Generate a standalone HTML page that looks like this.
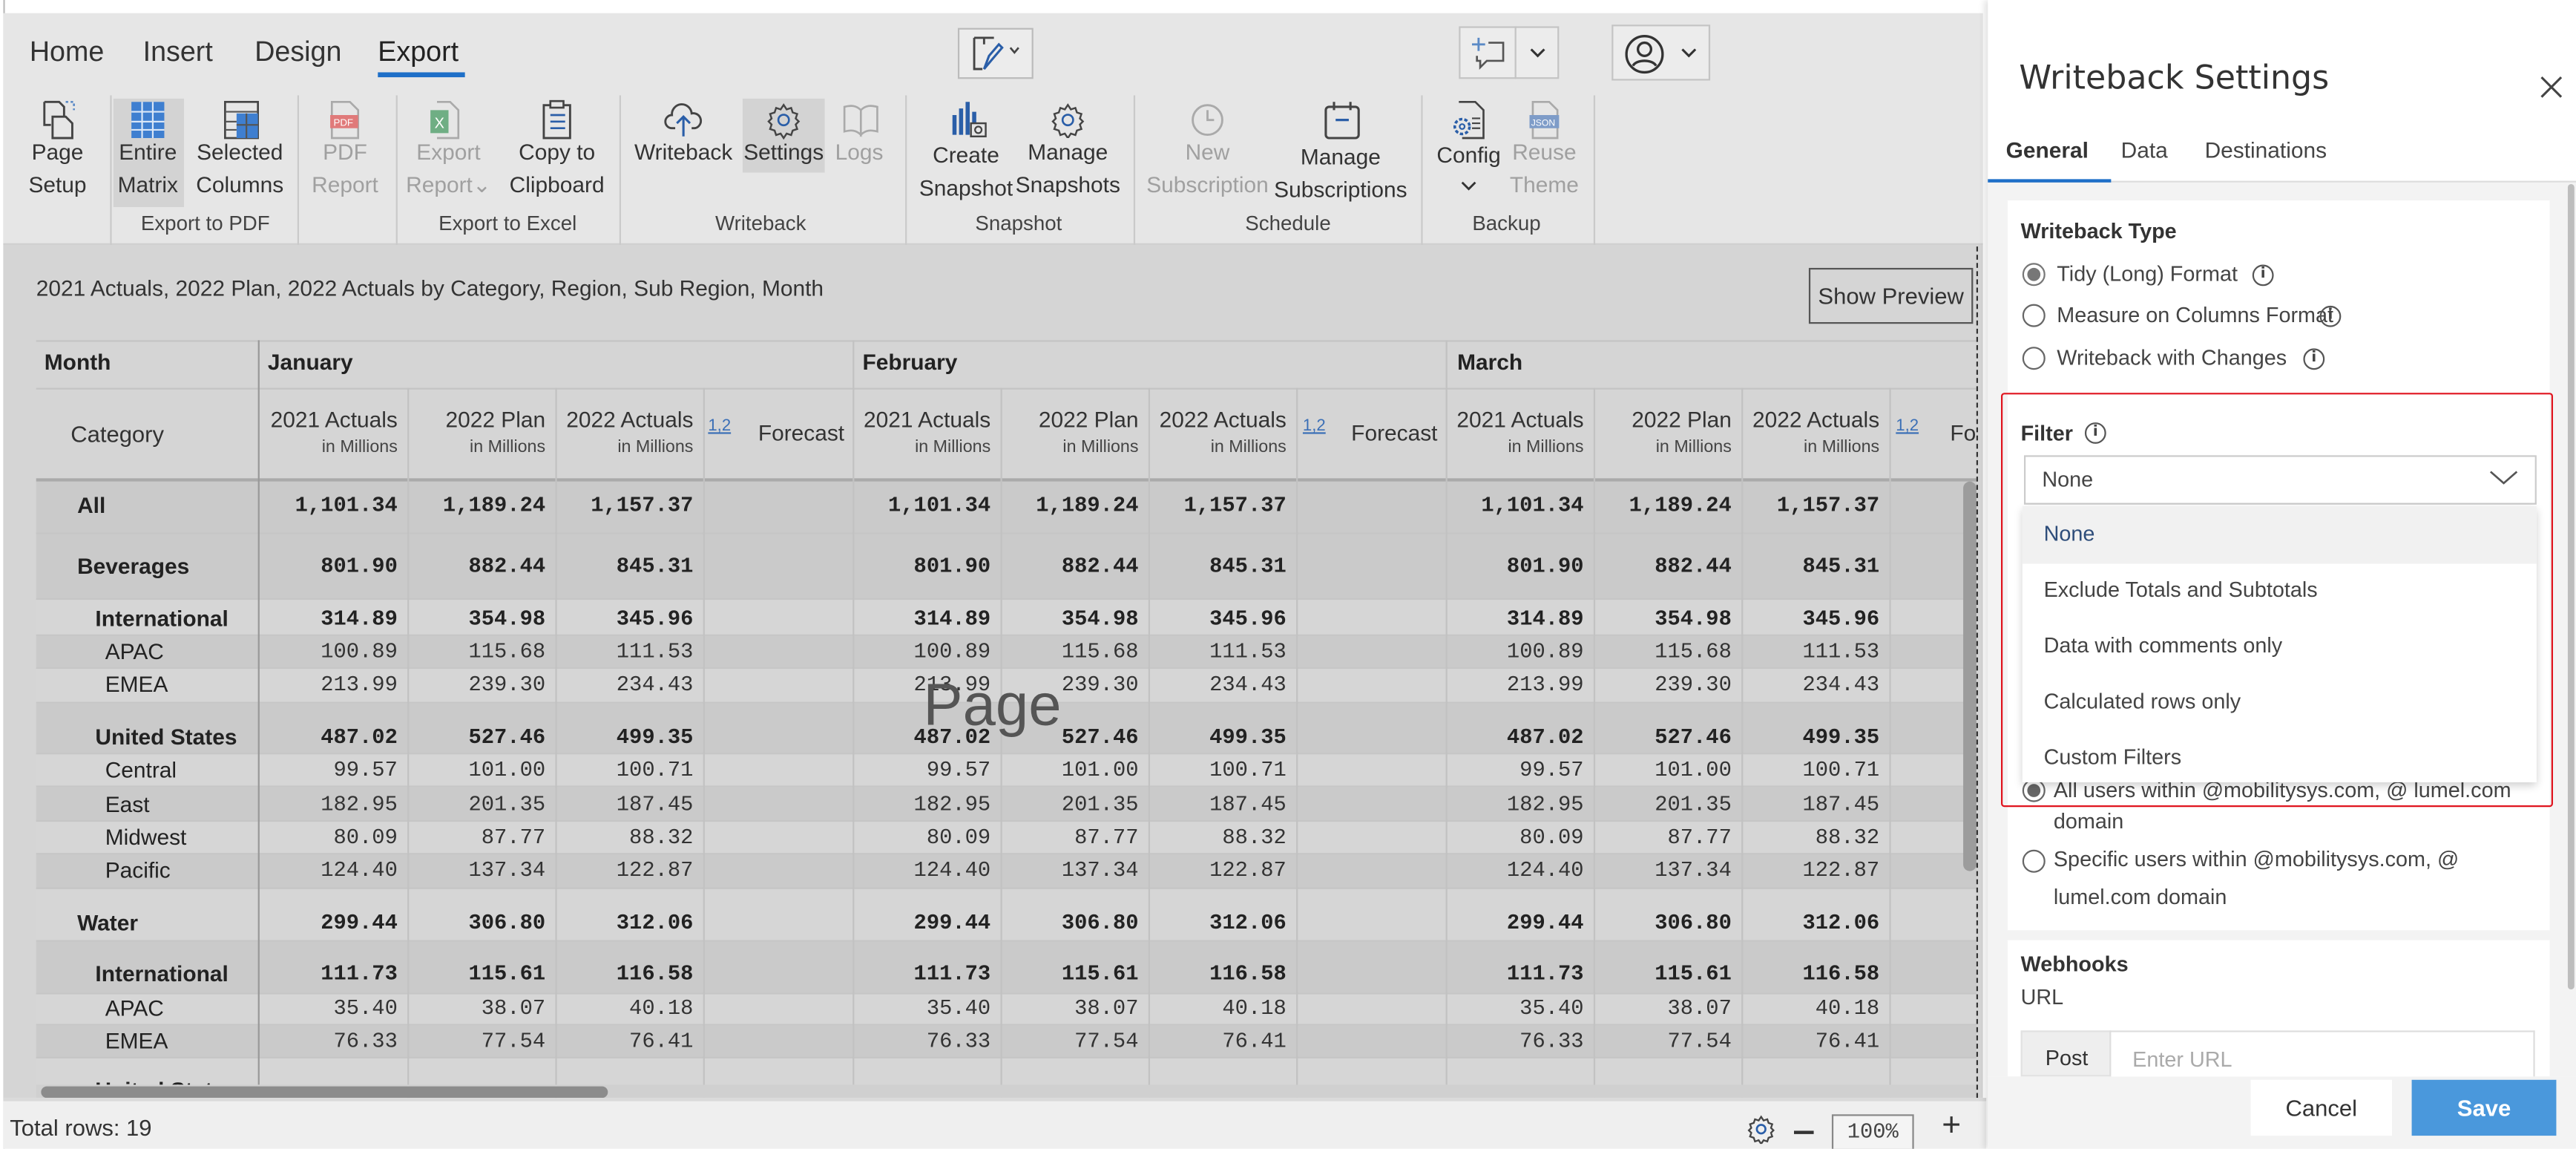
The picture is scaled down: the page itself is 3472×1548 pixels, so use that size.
<!DOCTYPE html>
<html><head><meta charset="utf-8">
<style>
*{margin:0;padding:0;box-sizing:border-box}
html,body{width:3472px;height:1547px;overflow:hidden;background:#fff}
#w{position:absolute;left:0;top:0;width:1568px;height:699px;transform:scale(2.21429);transform-origin:0 0;font-family:"Liberation Sans",sans-serif;color:#333;overflow:hidden}
.a{position:absolute}
.t{position:absolute;white-space:nowrap}
#rib{left:2px;top:8px;width:1205px;height:141px;background:#e6e6e6;border-bottom:1px solid #cfcfcf}
.tab{font-size:17px;top:22px;color:#333}
.lb{font-size:13.5px;color:#333;text-align:center;transform:translateX(-50%);line-height:20px;top:83px}
.dis{color:#a0a0a0}
.gl{font-size:12.5px;top:129px;transform:translateX(-50%);color:#444}
.sep{width:1px;background:#cacaca;top:58px;height:92px}
#cnt{left:2px;top:149px;width:1205px;height:519px;background:#d5d5d5}
.r{position:absolute;left:22px;width:1181px;border-bottom:1px solid #c6c6c6}
.d{background:#cacaca}.L{background:#d6d6d6}
.r i{position:absolute;top:var(--t);font-style:normal;font-family:"Liberation Mono","DejaVu Sans Mono",monospace;font-size:13px;line-height:16px;text-align:right;width:90px;color:#333}
.r b,.r span{position:absolute;top:var(--t);font-size:13.5px;line-height:16px;color:#222;white-space:nowrap}
.r b{font-weight:bold}
.bb i{font-weight:bold;color:#222}
.c1{left:130px}.c2{left:220px}.c3{left:310px}.c4{left:491px}.c5{left:581px}.c6{left:671px}.c7{left:852px}.c8{left:942px}.c9{left:1032px}
.vl{position:absolute;top:207px;height:453px;width:1px;background:#c2c2c2}
.hd{font-size:13.5px;color:#333;text-align:right;white-space:nowrap;position:absolute}
.hs{font-size:10.5px;color:#444;text-align:right;position:absolute;white-space:nowrap}
.ot{font-size:10px;color:#3b6fb6;text-decoration:underline;position:absolute}
#pn{left:1210px;top:0;width:358px;height:699px;background:#fff;box-shadow:-2px 0 4px rgba(0,0,0,.12)}
.p{position:absolute;white-space:nowrap;font-family:"Liberation Sans",sans-serif;color:#444}
.rad{position:absolute;width:14px;height:14px;border:1.3px solid #666;border-radius:50%;background:#fff}
.inf{position:absolute;width:13px;height:13px;border:1.2px solid #555;border-radius:50%;font-size:9px;line-height:11px;text-align:center;font-family:"DejaVu Sans",sans-serif;color:#444;font-weight:bold}
.dd{font-size:13px;color:#444;left:1244px}
</style></head><body><div id="w">

<div class="a" style="left:2px;top:0;width:1px;height:699px;background:#bbb"></div>
<div class="a" id="rib"></div>
<div class="t tab" style="left:18px">Home</div>
<div class="t tab" style="left:87px">Insert</div>
<div class="t tab" style="left:155px">Design</div>
<div class="t tab" style="left:230px;color:#222">Export</div>
<div class="a" style="left:230px;top:44px;width:53px;height:3px;background:#1e6fc8"></div>

<div class="a" style="left:583px;top:17px;width:46px;height:31px;border:1px solid #bbb;background:#ececec"></div>
<svg class="a" style="left:588px;top:20px" width="36" height="26" viewBox="0 0 36 26"><path d="M5 3h12M11 3v4M5 3v19h5" stroke="#444" stroke-width="1.3" fill="none"/><path d="M11 22l3-8 6-7 2 2-6 7z" stroke="#2a5ea8" stroke-width="1.4" fill="none"/><path d="M27 9l2.5 3 2.5-3" stroke="#444" stroke-width="1.2" fill="none"/></svg>
<div class="a" style="left:888px;top:16px;width:61px;height:32px;border:1px solid #c4c4c4;background:#ececec"></div>
<div class="a" style="left:922px;top:16px;width:1px;height:32px;background:#c4c4c4"></div>
<svg class="a" style="left:893px;top:20px" width="26" height="26" viewBox="0 0 26 26"><path d="M7 3v8M3 7h8" stroke="#5b8ac6" stroke-width="1.3"/><path d="M13 6h9v11h-10l-4 4v-4H6v-3" stroke="#555" stroke-width="1.2" fill="none"/></svg>
<svg class="a" style="left:930px;top:28px" width="12" height="8"><path d="M2 2l4 4 4-4" stroke="#333" stroke-width="1.4" fill="none"/></svg>
<div class="a" style="left:981px;top:15px;width:60px;height:34px;border:1px solid #c4c4c4;background:#ececec"></div>
<svg class="a" style="left:988px;top:20px" width="26" height="26" viewBox="0 0 26 26"><circle cx="13" cy="13" r="11" stroke="#333" stroke-width="1.5" fill="none"/><circle cx="13" cy="10" r="4" stroke="#333" stroke-width="1.5" fill="none"/><path d="M6 20c2-4 12-4 14 0" stroke="#333" stroke-width="1.5" fill="none"/></svg>
<svg class="a" style="left:1022px;top:28px" width="12" height="8"><path d="M2 2l4 4 4-4" stroke="#333" stroke-width="1.4" fill="none"/></svg>

<div class="a" style="left:69px;top:60px;width:43px;height:66px;background:#d3d3d3"></div>
<div class="a" style="left:452px;top:60px;width:50px;height:45px;background:#d3d3d3"></div>

<svg class="a" style="left:24px;top:60px" width="24" height="26" viewBox="0 0 24 26"><path d="M3 2h9l3 3v6M3 2v14h4" stroke="#444" stroke-width="1.3" fill="none"/><path d="M8 11h8l4 4v9H8z" stroke="#444" stroke-width="1.3" fill="none"/><path d="M16 2h5v5" stroke="#5b8ac6" stroke-width="1.2" stroke-dasharray="1.5 1.5" fill="none"/></svg>
<svg class="a" style="left:79px;top:61px" width="22" height="24" viewBox="0 0 22 24"><rect x="1" y="1" width="20" height="22" fill="#3f7fd0"/><path d="M1 7h20M1 13h20M1 18h20M7.5 1v22M14 1v22" stroke="#d9e6f7" stroke-width="1"/></svg>
<svg class="a" style="left:136px;top:61px" width="22" height="24" viewBox="0 0 22 24"><rect x="1" y="1" width="20" height="22" fill="none" stroke="#444" stroke-width="1.2"/><rect x="8" y="8" width="13" height="15" fill="#3f7fd0"/><path d="M1 7h20M8 15h13M14 8v15M1 13h7M1 18h7" stroke="#555" stroke-width="1"/></svg>
<svg class="a" style="left:199px;top:60px" width="22" height="26" viewBox="0 0 22 26"><path d="M3 2h11l5 5v17H3z" stroke="#aaa" stroke-width="1.2" fill="none"/><rect x="2" y="10" width="17" height="8" fill="#e07a7a"/><text x="4" y="16.5" font-size="6" fill="#fff" font-family="Liberation Sans">PDF</text></svg>
<svg class="a" style="left:259px;top:60px" width="22" height="26" viewBox="0 0 22 26"><path d="M7 2h8l5 5v17H7" stroke="#aaa" stroke-width="1.2" fill="none"/><rect x="3" y="7" width="11" height="14" fill="#6fae84"/><text x="5.5" y="18" font-size="9" fill="#fff" font-family="Liberation Sans">X</text></svg>
<svg class="a" style="left:328px;top:60px" width="22" height="26" viewBox="0 0 22 26"><rect x="3" y="4" width="16" height="20" stroke="#444" stroke-width="1.3" fill="none"/><rect x="7" y="1.5" width="8" height="4" stroke="#444" stroke-width="1.2" fill="#e6e6e6"/><path d="M7 10h9M7 14h9M7 18h9" stroke="#2a5ea8" stroke-width="1.2"/></svg>
<svg class="a" style="left:404px;top:61px" width="24" height="24" viewBox="0 0 24 24"><path d="M7 17H5a4 4 0 0 1 0-8 6 6 0 0 1 12-1 4 4 0 0 1 2 9h-2" stroke="#444" stroke-width="1.3" fill="none"/><path d="M12 22V11M8 14l4-4 4 4" stroke="#2a5ea8" stroke-width="1.4" fill="none"/></svg>
<svg class="a" style="left:466px;top:61px" width="22" height="24" viewBox="0 0 24 24"><circle cx="12" cy="12" r="3.5" stroke="#2a5ea8" stroke-width="1.3" fill="none"/><path d="M12 2l2 3 3-1 1 3 3 1-1 3 2 2-2 2 1 3-3 1-1 3-3-1-2 3-2-3-3 1-1-3-3-1 1-3-2-2 2-2-1-3 3-1 1-3 3 1z" stroke="#444" stroke-width="1.2" fill="none"/></svg>
<svg class="a" style="left:512px;top:62px" width="24" height="22" viewBox="0 0 24 22"><path d="M2 3c4-1 7-1 10 2v15c-3-3-6-3-10-2zM22 3c-4-1-7-1-10 2v15c3-3 6-3 10-2z" stroke="#aaa" stroke-width="1.2" fill="none"/></svg>
<svg class="a" style="left:577px;top:60px" width="24" height="26" viewBox="0 0 24 26"><path d="M4 10v12M8 6v16M12 2v20M16 8v8" stroke="#2a5ea8" stroke-width="2.5"/><rect x="14" y="15" width="9" height="8" stroke="#444" stroke-width="1.1" fill="#e6e6e6"/><circle cx="18.5" cy="19" r="2" stroke="#444" fill="none"/></svg>
<svg class="a" style="left:639px;top:62px" width="22" height="22" viewBox="0 0 24 24"><circle cx="12" cy="12" r="3.5" stroke="#2a5ea8" stroke-width="1.3" fill="none"/><path d="M12 2l2 3 3-1 1 3 3 1-1 3 2 2-2 2 1 3-3 1-1 3-3-1-2 3-2-3-3 1-1-3-3-1 1-3-2-2 2-2-1-3 3-1 1-3 3 1z" stroke="#444" stroke-width="1.2" fill="none"/></svg>
<svg class="a" style="left:724px;top:62px" width="22" height="22"><circle cx="11" cy="11" r="9" stroke="#aaa" stroke-width="1.3" fill="none"/><path d="M11 5v6h4" stroke="#aaa" stroke-width="1.3" fill="none"/></svg>
<svg class="a" style="left:805px;top:60px" width="24" height="26" viewBox="0 0 24 26"><rect x="2" y="5" width="20" height="19" rx="2" stroke="#444" stroke-width="1.4" fill="none"/><path d="M7 2v5M17 2v5" stroke="#444" stroke-width="1.4"/><path d="M8 13h8" stroke="#2a5ea8" stroke-width="1.5"/></svg>
<svg class="a" style="left:882px;top:60px" width="24" height="26" viewBox="0 0 24 26"><path d="M6 2h10l5 5v17H8" stroke="#444" stroke-width="1.2" fill="none"/><path d="M14 12h5M14 15h5M14 18h5" stroke="#444"/><circle cx="8" cy="17" r="4.5" stroke="#2a5ea8" stroke-width="1.6" stroke-dasharray="2 1.2" fill="none"/><circle cx="8" cy="17" r="1.5" stroke="#2a5ea8" fill="none"/></svg>
<svg class="a" style="left:929px;top:60px" width="22" height="26" viewBox="0 0 22 26"><path d="M4 2h10l5 5v17H4z" stroke="#aaa" stroke-width="1.2" fill="none"/><rect x="2" y="10" width="18" height="8" fill="#7e9cc8"/><text x="3" y="16.5" font-size="5.5" fill="#fff" font-family="Liberation Sans">JSON</text></svg>

<div class="t lb" style="left:35px">Page<br>Setup</div>
<div class="t lb" style="left:90px">Entire<br>Matrix</div>
<div class="t lb" style="left:146px">Selected<br>Columns</div>
<div class="t lb dis" style="left:210px">PDF<br>Report</div>
<div class="t lb dis" style="left:273px">Export<br>Report&#8964;</div>
<div class="t lb" style="left:339px">Copy to<br>Clipboard</div>
<div class="t lb" style="left:416px">Writeback</div>
<div class="t lb" style="left:477px">Settings</div>
<div class="t lb dis" style="left:523px">Logs</div>
<div class="t lb" style="left:588px;top:85px">Create<br>Snapshot</div>
<div class="t lb" style="left:650px">Manage<br>Snapshots</div>
<div class="t lb dis" style="left:735px">New<br>Subscription</div>
<div class="t lb" style="left:816px;top:86px">Manage<br>Subscriptions</div>
<div class="t lb" style="left:894px;top:85px">Config</div>
<svg class="a" style="left:889px;top:110px" width="10" height="7"><path d="M1 1l4 4 4-4" stroke="#333" stroke-width="1.3" fill="none"/></svg>
<div class="t lb dis" style="left:940px">Reuse<br>Theme</div>
<div class="sep a" style="left:67px"></div>
<div class="sep a" style="left:181px"></div>
<div class="sep a" style="left:241px"></div>
<div class="sep a" style="left:377px"></div>
<div class="sep a" style="left:551px"></div>
<div class="sep a" style="left:690px"></div>
<div class="sep a" style="left:865px"></div>
<div class="sep a" style="left:970px"></div>
<div class="t gl" style="left:125px">Export to PDF</div>
<div class="t gl" style="left:309px">Export to Excel</div>
<div class="t gl" style="left:463px">Writeback</div>
<div class="t gl" style="left:620px">Snapshot</div>
<div class="t gl" style="left:784px">Schedule</div>
<div class="t gl" style="left:917px">Backup</div>

<div class="a" id="cnt"></div>
<div class="t" style="left:22px;top:168px;font-size:13.5px;color:#333">2021 Actuals, 2022 Plan, 2022 Actuals by Category, Region, Sub Region, Month</div>
<div class="a" style="left:1101px;top:163px;width:100px;height:34px;border:1px solid #555;font-size:14px;line-height:32px;text-align:center;color:#333">Show Preview</div>

<div class="a" style="left:22px;top:207px;width:1181px;height:86px;background:#d5d5d5;border-top:1px solid #c4c4c4;border-bottom:2px solid #aaa"></div>
<div class="a" style="left:22px;top:236px;width:1181px;height:1px;background:#c4c4c4"></div>
<div class="t" style="left:27px;top:213px;font-size:13.5px;font-weight:bold;color:#222">Month</div>
<div class="t" style="left:163px;top:213px;font-size:13.5px;font-weight:bold;color:#222">January</div>
<div class="t" style="left:525px;top:213px;font-size:13.5px;font-weight:bold;color:#222">February</div>
<div class="t" style="left:887px;top:213px;font-size:13.5px;font-weight:bold;color:#222">March</div>
<div class="t" style="left:43px;top:256px;font-size:14px;color:#333">Category</div>

<div class="hd" style="right:1326px;top:248px">2021 Actuals</div><div class="hs" style="right:1326px;top:266px">in Millions</div>
<div class="hd" style="right:1236px;top:248px">2022 Plan</div><div class="hs" style="right:1236px;top:266px">in Millions</div>
<div class="hd" style="right:1146px;top:248px">2022 Actuals</div><div class="hs" style="right:1146px;top:266px">in Millions</div>
<div class="ot" style="left:431px;top:254px">1,2</div>
<div class="hd" style="right:1054px;top:256px">Forecast</div>
<div class="hd" style="right:965px;top:248px">2021 Actuals</div><div class="hs" style="right:965px;top:266px">in Millions</div>
<div class="hd" style="right:875px;top:248px">2022 Plan</div><div class="hs" style="right:875px;top:266px">in Millions</div>
<div class="hd" style="right:785px;top:248px">2022 Actuals</div><div class="hs" style="right:785px;top:266px">in Millions</div>
<div class="ot" style="left:793px;top:254px">1,2</div>
<div class="hd" style="right:693px;top:256px">Forecast</div>
<div class="hd" style="right:604px;top:248px">2021 Actuals</div><div class="hs" style="right:604px;top:266px">in Millions</div>
<div class="hd" style="right:514px;top:248px">2022 Plan</div><div class="hs" style="right:514px;top:266px">in Millions</div>
<div class="hd" style="right:424px;top:248px">2022 Actuals</div><div class="hs" style="right:424px;top:266px">in Millions</div>
<div class="ot" style="left:1154px;top:254px">1,2</div>
<div class="hd" style="left:1187px;top:256px">Fo</div>

<div class="r d bb" style="top:293px;height:32px;--t:7px"><b style="left:25px">All</b><i class="c1">1,101.34</i><i class="c2">1,189.24</i><i class="c3">1,157.37</i><i class="c4">1,101.34</i><i class="c5">1,189.24</i><i class="c6">1,157.37</i><i class="c7">1,101.34</i><i class="c8">1,189.24</i><i class="c9">1,157.37</i></div>
<div class="r d bb" style="top:325px;height:40px;--t:12px"><b style="left:25px">Beverages</b><i class="c1">801.90</i><i class="c2">882.44</i><i class="c3">845.31</i><i class="c4">801.90</i><i class="c5">882.44</i><i class="c6">845.31</i><i class="c7">801.90</i><i class="c8">882.44</i><i class="c9">845.31</i></div>
<div class="r L bb" style="top:365px;height:22px;--t:4px"><b style="left:36px">International</b><i class="c1">314.89</i><i class="c2">354.98</i><i class="c3">345.96</i><i class="c4">314.89</i><i class="c5">354.98</i><i class="c6">345.96</i><i class="c7">314.89</i><i class="c8">354.98</i><i class="c9">345.96</i></div>
<div class="r d" style="top:387px;height:20px;--t:2px"><span style="left:42px">APAC</span><i class="c1">100.89</i><i class="c2">115.68</i><i class="c3">111.53</i><i class="c4">100.89</i><i class="c5">115.68</i><i class="c6">111.53</i><i class="c7">100.89</i><i class="c8">115.68</i><i class="c9">111.53</i></div>
<div class="r L" style="top:407px;height:21px;--t:2px"><span style="left:42px">EMEA</span><i class="c1">213.99</i><i class="c2">239.30</i><i class="c3">234.43</i><i class="c4">213.99</i><i class="c5">239.30</i><i class="c6">234.43</i><i class="c7">213.99</i><i class="c8">239.30</i><i class="c9">234.43</i></div>
<div class="r d bb" style="top:428px;height:31px;--t:13px"><b style="left:36px">United States</b><i class="c1">487.02</i><i class="c2">527.46</i><i class="c3">499.35</i><i class="c4">487.02</i><i class="c5">527.46</i><i class="c6">499.35</i><i class="c7">487.02</i><i class="c8">527.46</i><i class="c9">499.35</i></div>
<div class="r L" style="top:459px;height:20px;--t:2px"><span style="left:42px">Central</span><i class="c1">99.57</i><i class="c2">101.00</i><i class="c3">100.71</i><i class="c4">99.57</i><i class="c5">101.00</i><i class="c6">100.71</i><i class="c7">99.57</i><i class="c8">101.00</i><i class="c9">100.71</i></div>
<div class="r d" style="top:479px;height:21px;--t:3px"><span style="left:42px">East</span><i class="c1">182.95</i><i class="c2">201.35</i><i class="c3">187.45</i><i class="c4">182.95</i><i class="c5">201.35</i><i class="c6">187.45</i><i class="c7">182.95</i><i class="c8">201.35</i><i class="c9">187.45</i></div>
<div class="r L" style="top:500px;height:20px;--t:2px"><span style="left:42px">Midwest</span><i class="c1">80.09</i><i class="c2">87.77</i><i class="c3">88.32</i><i class="c4">80.09</i><i class="c5">87.77</i><i class="c6">88.32</i><i class="c7">80.09</i><i class="c8">87.77</i><i class="c9">88.32</i></div>
<div class="r d" style="top:520px;height:21px;--t:2px"><span style="left:42px">Pacific</span><i class="c1">124.40</i><i class="c2">137.34</i><i class="c3">122.87</i><i class="c4">124.40</i><i class="c5">137.34</i><i class="c6">122.87</i><i class="c7">124.40</i><i class="c8">137.34</i><i class="c9">122.87</i></div>
<div class="r L bb" style="top:541px;height:32px;--t:13px"><b style="left:25px">Water</b><i class="c1">299.44</i><i class="c2">306.80</i><i class="c3">312.06</i><i class="c4">299.44</i><i class="c5">306.80</i><i class="c6">312.06</i><i class="c7">299.44</i><i class="c8">306.80</i><i class="c9">312.06</i></div>
<div class="r d bb" style="top:573px;height:32px;--t:12px"><b style="left:36px">International</b><i class="c1">111.73</i><i class="c2">115.61</i><i class="c3">116.58</i><i class="c4">111.73</i><i class="c5">115.61</i><i class="c6">116.58</i><i class="c7">111.73</i><i class="c8">115.61</i><i class="c9">116.58</i></div>
<div class="r L" style="top:605px;height:19px;--t:1px"><span style="left:42px">APAC</span><i class="c1">35.40</i><i class="c2">38.07</i><i class="c3">40.18</i><i class="c4">35.40</i><i class="c5">38.07</i><i class="c6">40.18</i><i class="c7">35.40</i><i class="c8">38.07</i><i class="c9">40.18</i></div>
<div class="r d" style="top:624px;height:20px;--t:2px"><span style="left:42px">EMEA</span><i class="c1">76.33</i><i class="c2">77.54</i><i class="c3">76.41</i><i class="c4">76.33</i><i class="c5">77.54</i><i class="c6">76.41</i><i class="c7">76.33</i><i class="c8">77.54</i><i class="c9">76.41</i></div>
<div class="r L" style="top:644px;height:16px;border:none;overflow:hidden;--t:12px"><b style="left:36px">United States</b></div>

<div class="vl" style="left:157px;background:#999;top:207px"></div>
<div class="vl" style="left:248px;top:236px"></div><div class="vl" style="left:338px;top:236px"></div><div class="vl" style="left:428px;top:236px"></div>
<div class="vl" style="left:519px"></div>
<div class="vl" style="left:609px;top:236px"></div><div class="vl" style="left:699px;top:236px"></div><div class="vl" style="left:789px;top:236px"></div>
<div class="vl" style="left:880px"></div>
<div class="vl" style="left:970px;top:236px"></div><div class="vl" style="left:1060px;top:236px"></div><div class="vl" style="left:1150px;top:236px"></div>

<div class="t" style="left:562px;top:408px;font-size:36px;color:#555">Page</div>
<div class="a" style="left:22px;top:660px;width:1181px;height:8px;background:#d0d0d0"></div>
<div class="a" style="left:25px;top:661px;width:345px;height:7px;background:#8c8c8c;border-radius:4px"></div>
<div class="a" style="left:1195px;top:293px;width:8px;height:237px;background:#9c9c9c;border-radius:4px"></div>
<div class="a" style="left:1203px;top:150px;height:518px;border-left:1px dashed #333"></div>

<div class="a" style="left:2px;top:668px;width:1207px;height:31px;background:#efefef;border-top:2px solid #dadada"></div>
<div class="t" style="left:6px;top:678px;font-size:14px;color:#333">Total rows: 19</div>
<svg class="a" style="left:1063px;top:678px" width="18" height="18" viewBox="0 0 24 24"><circle cx="12" cy="12" r="3.5" stroke="#2a5ea8" stroke-width="1.6" fill="none"/><path d="M12 2l2 3 3-1 1 3 3 1-1 3 2 2-2 2 1 3-3 1-1 3-3-1-2 3-2-3-3 1-1-3-3-1 1-3-2-2 2-2-1-3 3-1 1-3 3 1z" stroke="#444" stroke-width="1.4" fill="none"/></svg>
<div class="a" style="left:1092px;top:688px;width:12px;height:1.5px;background:#333"></div>
<div class="a" style="left:1115px;top:678px;width:50px;height:22px;border:1px solid #888;background:#f4f4f4;font-family:'Liberation Mono',monospace;font-size:13px;text-align:center;line-height:20px;color:#444">100%</div>
<div class="t" style="left:1182px;top:674px;font-size:20px;color:#333">+</div>

<div class="a" id="pn"></div>
<div class="p" style="left:1229px;top:35px;font-size:20px;color:#333;font-family:'DejaVu Sans',sans-serif">Writeback Settings</div>
<svg class="a" style="left:1545px;top:45px" width="16" height="16"><path d="M2 2l12 12M14 2L2 14" stroke="#444" stroke-width="1.4"/></svg>
<div class="p" style="left:1221px;top:84px;font-size:13.5px;font-weight:bold;color:#333">General</div>
<div class="p" style="left:1291px;top:84px;font-size:13.5px;color:#444">Data</div>
<div class="p" style="left:1342px;top:84px;font-size:13.5px;color:#444">Destinations</div>
<div class="a" style="left:1210px;top:110px;width:358px;height:545px;background:#f3f3f3;border-top:1px solid #ddd"></div>
<div class="a" style="left:1210px;top:109px;width:75px;height:2px;background:#1e6fc8"></div>
<div class="a" style="left:1563px;top:112px;width:4px;height:490px;background:#bdbdbd;border-radius:2px"></div>
<div class="a" style="left:1222px;top:122px;width:330px;height:444px;background:#fff"></div>
<div class="a" style="left:1222px;top:572px;width:330px;height:83px;background:#fff"></div>
<div class="p" style="left:1230px;top:133px;font-size:13px;font-weight:bold;color:#333">Writeback Type</div>
<div class="rad" style="left:1231px;top:160px;border-color:#777"></div><div class="a" style="left:1234px;top:163px;width:8px;height:8px;border-radius:50%;background:#777"></div>
<div class="p" style="left:1252px;top:159px;font-size:13px">Tidy (Long) Format</div><div class="inf" style="left:1371px;top:161px">i</div>
<div class="rad" style="left:1231px;top:185px"></div>
<div class="p" style="left:1252px;top:184px;font-size:13px">Measure on Columns Format</div><div class="inf" style="left:1412px;top:186px">i</div>
<div class="rad" style="left:1231px;top:211px"></div>
<div class="p" style="left:1252px;top:210px;font-size:13px">Writeback with Changes</div><div class="inf" style="left:1402px;top:212px">i</div>

<div class="rad" style="left:1231px;top:474px"></div><div class="a" style="left:1234px;top:477px;width:8px;height:8px;border-radius:50%;background:#666"></div>
<div class="p" style="left:1250px;top:473px;font-size:13px">All users within @mobilitysys.com, @ lumel.com</div>
<div class="p" style="left:1250px;top:492px;font-size:13px">domain</div>
<div class="rad" style="left:1231px;top:517px"></div>
<div class="p" style="left:1250px;top:515px;font-size:13px">Specific users within @mobilitysys.com, @</div>
<div class="p" style="left:1250px;top:538px;font-size:13px">lumel.com domain</div>

<div class="a" style="left:1218px;top:239px;width:336px;height:252px;border:1px solid #e0141e;border-radius:2px"></div>
<div class="p" style="left:1230px;top:256px;font-size:13px;font-weight:bold;color:#333">Filter</div><div class="inf" style="left:1269px;top:257px">i</div>
<div class="a" style="left:1232px;top:277px;width:312px;height:30px;border:1px solid #ccc;background:#fff"></div>
<div class="p" style="left:1243px;top:284px;font-size:13px">None</div>
<svg class="a" style="left:1515px;top:286px" width="18" height="10"><path d="M1 1l8 7 8-7" stroke="#555" stroke-width="1.2" fill="none"/></svg>
<div class="a" style="left:1231px;top:308px;width:313px;height:168px;background:#fff;box-shadow:0 2px 5px rgba(0,0,0,.2)"></div>
<div class="a" style="left:1231px;top:308px;width:313px;height:35px;background:#f1f1f1"></div>
<div class="p dd" style="top:317px;color:#2e4d7a">None</div>
<div class="p dd" style="top:351px">Exclude Totals and Subtotals</div>
<div class="p dd" style="top:385px">Data with comments only</div>
<div class="p dd" style="top:419px">Calculated rows only</div>
<div class="p dd" style="top:453px">Custom Filters</div>

<div class="p" style="left:1230px;top:579px;font-size:13px;font-weight:bold;color:#333">Webhooks</div>
<div class="p" style="left:1230px;top:599px;font-size:13px">URL</div>
<div class="a" style="left:1230px;top:627px;width:55px;height:28px;background:#eee;border:1px solid #e2e2e2"></div>
<div class="p" style="left:1245px;top:636px;font-size:13px;color:#333">Post</div>
<div class="a" style="left:1284px;top:627px;width:259px;height:28px;border:1px solid #ddd;border-bottom:none;background:#fff"></div>
<div class="p" style="left:1298px;top:637px;font-size:13px;color:#aaa">Enter URL</div>
<div class="a" style="left:1210px;top:655px;width:358px;height:44px;background:#f3f3f3"></div>
<div class="a" style="left:1370px;top:657px;width:86px;height:34px;background:#fff;font-size:14px;text-align:center;line-height:34px;color:#333">Cancel</div>
<div class="a" style="left:1468px;top:657px;width:88px;height:34px;background:#4a98dc;font-size:14px;font-weight:bold;text-align:center;line-height:34px;color:#fff">Save</div>

</div></body></html>
